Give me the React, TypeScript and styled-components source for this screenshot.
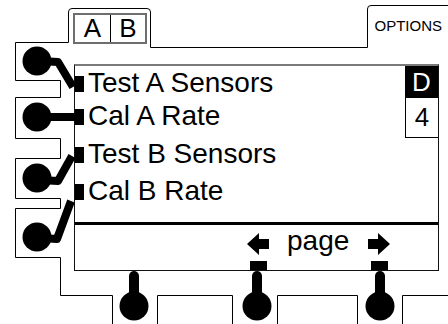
import React from "react";
import styled, { createGlobalStyle } from "styled-components";

const GlobalStyle = createGlobalStyle`
	html, body {
		margin: 0;
		padding: 0;
		background: #ffffff;
	}
	body {
		font-family: "Liberation Sans", Arial, sans-serif;
		color: #000000;
	}
`;

interface MenuItem {
	label: string;
	offset: number;
}

const menuItems: MenuItem[] = [
	{ label: "Test A Sensors", offset: 0 },
	{ label: "Cal A Rate", offset: -1 },
	{ label: "Test B Sensors", offset: 4 },
	{ label: "Cal B Rate", offset: 3 },
];

// soft keys drawn around the display, in stage pixels
const sideKnobs = [
	{ cy: 61, stem: "M40 61 L58 62 L73 87" },
	{ cy: 117, stem: "M40 117 L76 117" },
	{ cy: 178, stem: "M40 180 L58 181 L72 156" },
	{ cy: 237, stem: "M40 238 L57 239 L71 201" },
];

const bottomKnobs = [134, 257, 380];

const Arrow: React.FC<{ dir: "left" | "right" }> = ({ dir }) => (
	<svg width="22" height="22" viewBox="0 0 22 22">
		<polygon
			points="0,11 12,0 12,6 22,6 22,16 12,16 12,22"
			fill="#000"
			transform={dir === "right" ? "translate(22 0) scale(-1 1)" : undefined}
		/>
	</svg>
);

const App: React.FC = () => {
	return (
		<Stage>
			<GlobalStyle />
			<TopRow>
				<ChannelTabs>
					<ChannelCell>A</ChannelCell>
					<ChannelCell divided>B</ChannelCell>
				</ChannelTabs>
				<Options>OPTIONS</Options>
			</TopRow>
			<Screen>
				<Body>
					<Menu>
						{menuItems.map((item) => (
							<MenuRow key={item.label} offset={item.offset}>
								<Marker />
								{item.label}
							</MenuRow>
						))}
					</Menu>
					<SideColumn>
						<ModeBox>D</ModeBox>
						<PageBox>4</PageBox>
					</SideColumn>
				</Body>
				<Divider />
				<Footer>
					<FootSlot>
						<Arrow dir="left" />
						<FootMarker />
					</FootSlot>
					<PageLabel>page</PageLabel>
					<FootSlot>
						<Arrow dir="right" />
						<FootMarker />
					</FootSlot>
				</Footer>
			</Screen>
			<Bezel width="448" height="324" viewBox="0 0 448 324">
				<path
					d="M112.5 324 V295.5 H60.5 V257.5 H15.5 V208.5 H60.5 V198.5 H15.5 V158.5 H60.5 V138.5 H15.5 V97.5 H60.5 V80.5 H15.5 V42.5 H68.5 V12 Q68.5 8.5 72 8.5 H147 Q150.5 8.5 150.5 12 V47.5 H367.5 V9 Q367.5 5.5 371 5.5 H448"
					fill="none"
					stroke="#000"
					strokeWidth="1"
				/>
				<path
					d="M157.5 324 V295.5 H232.5 V324 M277.5 324 V295.5 H357.5 V324 M402.5 324 V295.5 H448"
					fill="none"
					stroke="#000"
					strokeWidth="1"
				/>
				{sideKnobs.map((k) => (
					<g key={k.cy}>
						<path d={k.stem} fill="none" stroke="#000" strokeWidth="8" strokeLinejoin="round" />
						<circle cx="37" cy={k.cy} r="14.5" fill="#000" />
					</g>
				))}
				{bottomKnobs.map((x) => (
					<g key={x}>
						<path d={`M${x} 306 V276`} stroke="#000" strokeWidth="10" strokeLinecap="round" />
						<circle cx={x} cy="306" r="14.5" fill="#000" />
					</g>
				))}
			</Bezel>
		</Stage>
	);
};

export default App;

const Stage = styled.div`
	position: relative;
	width: 448px;
	height: 324px;
	overflow: hidden;
	background: #ffffff;
`;

const Bezel = styled.svg`
	position: absolute;
	left: 0;
	top: 0;
	pointer-events: none;
`;

const TopRow = styled.div`
	display: flex;
	align-items: flex-start;
	height: 64px;
	box-sizing: border-box;
	padding-left: 73px;
`;

const ChannelTabs = styled.div`
	display: flex;
	margin-top: 13px;
	height: 31px;
	box-sizing: border-box;
	border: 2px solid #6e6e6e;
`;

type CellProps = { divided?: boolean };

const ChannelCell = styled.div<CellProps>`
	width: 35px;
	box-sizing: border-box;
	display: flex;
	justify-content: center;
	align-items: center;
	font-size: 26px;
	line-height: 27px;
	border-left: ${(props) => (props.divided ? "1px solid #000" : "none")};
`;

const Options = styled.div`
	margin-left: auto;
	margin-right: 6px;
	margin-top: 18px;
	font-size: 15px;
	line-height: 15px;
`;

const Screen = styled.div`
	margin-left: 74px;
	width: 365px;
	height: 207px;
	box-sizing: border-box;
	border: 1px solid #111111;
	border-top: 2px solid #7a7a7a;
	display: flex;
	flex-direction: column;
`;

const Body = styled.div`
	height: 156px;
	display: flex;
	flex-direction: row;
`;

const Menu = styled.div`
	flex: 1;
	display: flex;
	flex-direction: column;
`;

type RowProps = { offset: number };

const MenuRow = styled.div<RowProps>`
	margin-top: ${(props) => props.offset}px;
	font-size: 28px;
	line-height: 34px;
	white-space: nowrap;
`;

const Marker = styled.span`
	display: inline-block;
	width: 9px;
	height: 16px;
	margin-right: 4px;
	background: #000000;
`;

const SideColumn = styled.div`
	width: 33px;
	display: flex;
	flex-direction: column;
`;

const ModeBox = styled.div`
	height: 32px;
	background: #000000;
	color: #ffffff;
	font-size: 26px;
	display: flex;
	justify-content: center;
	align-items: center;
`;

const PageBox = styled.div`
	height: 40px;
	box-sizing: border-box;
	border-left: 1px solid #000000;
	border-bottom: 1px solid #000000;
	font-size: 26px;
	display: flex;
	justify-content: center;
	align-items: center;
`;

const Divider = styled.div`
	height: 3px;
	background: #000000;
`;

const Footer = styled.div`
	flex: 1;
	display: flex;
	flex-direction: row;
	padding-left: 171px;
`;

const FootSlot = styled.div`
	width: 24px;
	display: flex;
	flex-direction: column;
	align-items: center;
	justify-content: space-between;
	padding-top: 8px;
`;

const FootMarker = styled.div`
	width: 17px;
	height: 9px;
	background: #000000;
`;

const PageLabel = styled.div`
	align-self: flex-start;
	margin: 1px 18px 0 17px;
	font-size: 28px;
	line-height: 30px;
`;
